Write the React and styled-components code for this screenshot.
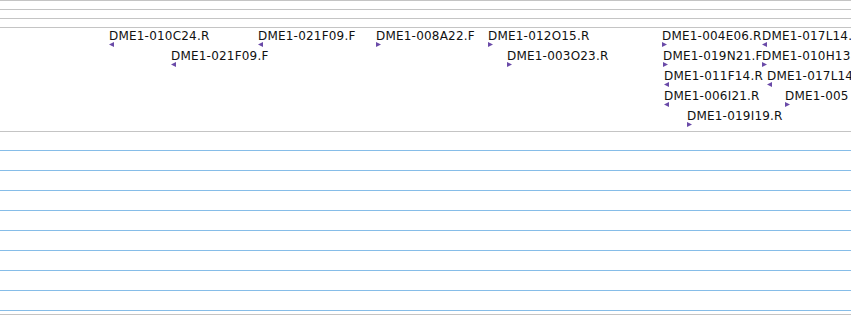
import React from 'react';
import styled, { createGlobalStyle } from 'styled-components';

const GlobalStyle = createGlobalStyle`
	html, body {
		margin: 0;
		padding: 0;
		background: #fff;
	}
	body {
		font-family: 'DejaVu Sans', 'Liberation Sans', sans-serif;
	}
`;

const features = [
	{ name: 'DME1-010C24.R', x: 109, row: 0, strand: -1 },
	{ name: 'DME1-021F09.F', x: 258, row: 0, strand: -1 },
	{ name: 'DME1-008A22.F', x: 376, row: 0, strand: 1 },
	{ name: 'DME1-012O15.R', x: 488, row: 0, strand: 1 },
	{ name: 'DME1-004E06.R', x: 662, row: 0, strand: 1 },
	{ name: 'DME1-017L14.', x: 762, row: 0, strand: -1 },
	{ name: 'DME1-021F09.F', x: 171, row: 1, strand: -1 },
	{ name: 'DME1-003O23.R', x: 507, row: 1, strand: 1 },
	{ name: 'DME1-019N21.F', x: 663, row: 1, strand: 1 },
	{ name: 'DME1-010H13', x: 762, row: 1, strand: 1 },
	{ name: 'DME1-011F14.R', x: 664, row: 2, strand: -1 },
	{ name: 'DME1-017L14', x: 767, row: 2, strand: -1 },
	{ name: 'DME1-006I21.R', x: 664, row: 3, strand: -1 },
	{ name: 'DME1-005', x: 785, row: 3, strand: 1 },
	{ name: 'DME1-019I19.R', x: 687, row: 4, strand: 1 },
];

const Panel = styled.div`
	width: 851px;
	height: 315px;
	overflow: hidden;
	display: flex;
	flex-direction: column;
`;

const EmptyTrack = styled.div`
	height: 8px;
	border-top: 1px solid #c4c4c4;
`;

const FeatureTrack = styled.div`
	position: relative;
	height: 103px;
	border-top: 1px solid #c4c4c4;
	border-bottom: 1px solid #c4c4c4;
	overflow: hidden;
`;

const Gap = styled.div`
	height: 18px;
`;

const Grid = styled.div`
	display: flex;
	flex-direction: column;
	border-bottom: 1px solid #c4c4c4;
`;

const GridRow = styled.div`
	height: ${(p) => p.$h - 1}px;
	border-top: 1px solid #86bde8;
`;

const Feature = styled.div`
	position: absolute;
	display: flex;
	flex-direction: column;
	align-items: flex-start;
`;

const Label = styled.span`
	font-size: 12px;
	line-height: 11px;
	letter-spacing: 0.2px;
	color: #111;
	white-space: nowrap;
`;

const Arrow = styled.svg`
	display: block;
	width: 5px;
	height: 5px;
	fill: #6a4aa8;
`;

function Strand({ strand }) {
	return (
		<Arrow viewBox="0 0 5 5">
			{strand > 0 ? <polygon points="0,0 5,2.5 0,5" /> : <polygon points="5,0 0,2.5 5,5" />}
		</Arrow>
	);
}

export default function App() {
	return (
		<>
			<GlobalStyle />
			<Panel>
				<EmptyTrack />
				<EmptyTrack />
				<EmptyTrack />
				<FeatureTrack>
					{features.map((f, i) => (
						<Feature key={i} style={{ left: f.x, top: 3 + f.row * 20 }}>
							<Label>{f.name}</Label>
							<Strand strand={f.strand} />
						</Feature>
					))}
				</FeatureTrack>
				<Gap />
				<Grid>
					{[20, 20, 20, 20, 20, 20, 20, 20, 4].map((h, i) => (
						<GridRow key={i} $h={h} />
					))}
				</Grid>
			</Panel>
		</>
	);
}
